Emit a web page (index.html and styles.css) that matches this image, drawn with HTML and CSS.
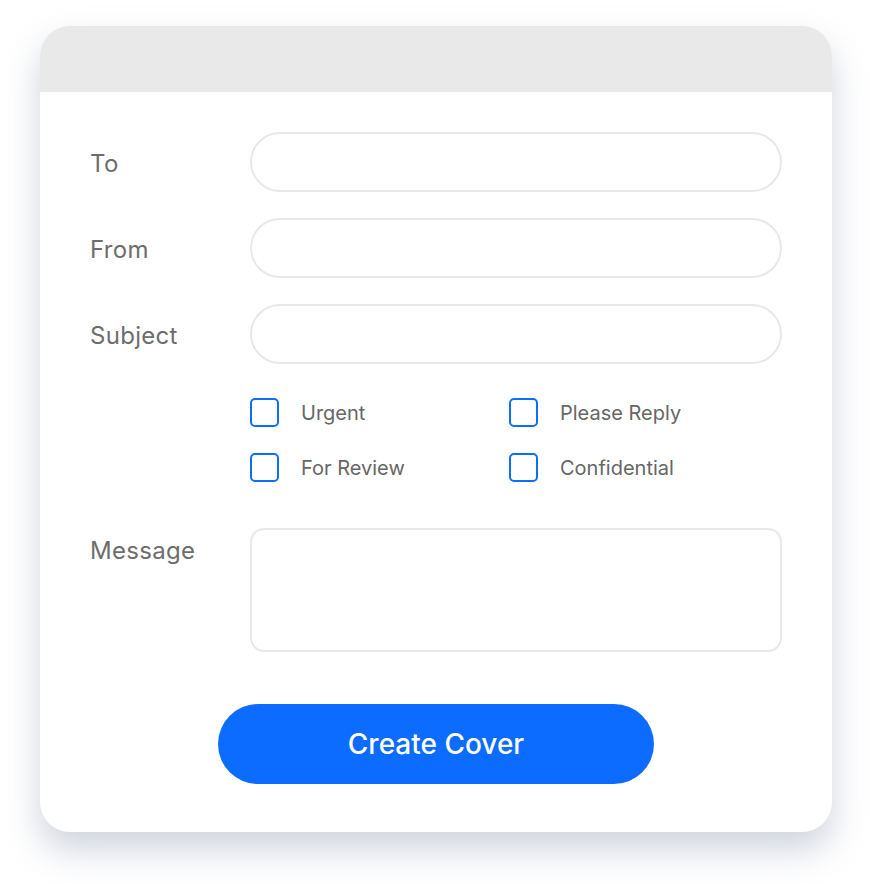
FILE: index.html
```html
<!DOCTYPE html>
<html lang="en">
<head>
    <meta charset="UTF-8">
    <meta name="viewport" content="width=device-width, initial-scale=1.0">
    <title>Fax Cover</title>
    <link rel="stylesheet" href="styles.css">
</head>
<body>
    <div class="card">
        <div class="card-header"></div>
        <form class="cover-form">
            <div class="row">
                <label for="to">To</label>
                <input type="text" id="to" class="field">
            </div>
            <div class="row">
                <label for="from">From</label>
                <input type="text" id="from" class="field">
            </div>
            <div class="row">
                <label for="subject">Subject</label>
                <input type="text" id="subject" class="field">
            </div>

            <div class="options">
                <label class="check"><input type="checkbox"><span>Urgent</span></label>
                <label class="check"><input type="checkbox"><span>Please Reply</span></label>
                <label class="check"><input type="checkbox"><span>For Review</span></label>
                <label class="check"><input type="checkbox"><span>Confidential</span></label>
            </div>

            <div class="row row-top">
                <label for="message">Message</label>
                <textarea id="message" class="field message"></textarea>
            </div>

            <button type="button" class="submit">Create Cover</button>
        </form>
    </div>
</body>
</html>
```

FILE: styles.css
```css
body {
    margin: 0;
    padding: 26px 38px 52px 40px;
    background: #ffffff;
    font-family: "Inter", "Noto Sans", sans-serif;
}

.card {
    width: 792px;
    height: 806px;
    background-color: #ffffff;
    border-radius: 30px;
    overflow: hidden;
    box-shadow: 0 18px 34px rgba(150, 160, 180, 0.45);
}

.card-header {
    height: 66px;
    background-color: #e9e9e9;
}

.cover-form {
    padding: 40px 50px 0 50px;
    display: flex;
    flex-direction: column;
}

.row {
    display: flex;
    align-items: center;
    margin-bottom: 26px;
}

.row label {
    width: 160px;
    flex-shrink: 0;
    font-size: 24px;
    color: #6d6d6d;
    letter-spacing: 0.3px;
    padding-top: 3px;
}

.row-top {
    align-items: flex-start;
    margin-bottom: 52px;
}

.row-top label {
    padding-top: 8px;
}

.field {
    flex: 1;
    height: 60px;
    box-sizing: border-box;
    border: 2px solid #e8e8e8;
    border-radius: 30px;
    padding: 0 22px;
    font-size: 18px;
    font-family: inherit;
    outline: none;
}

.message {
    height: 124px;
    border-radius: 14px;
    resize: none;
    padding: 14px 18px;
}

.options {
    margin: 8px 0 46px 160px;
    display: grid;
    grid-template-columns: 259px 1fr;
    row-gap: 26px;
}

.check {
    display: flex;
    align-items: center;
    gap: 22px;
    font-size: 20px;
    color: #666666;
}

.check input {
    appearance: none;
    margin: 0;
    width: 29px;
    height: 29px;
    box-sizing: border-box;
    border: 2px solid #0d6efd;
    border-radius: 5px;
}

.submit {
    align-self: center;
    width: 436px;
    height: 80px;
    border: none;
    border-radius: 40px;
    background-color: #0b6cff;
    color: #ffffff;
    font-family: inherit;
    font-size: 28px;
    font-weight: 500;
    cursor: pointer;
}
```
